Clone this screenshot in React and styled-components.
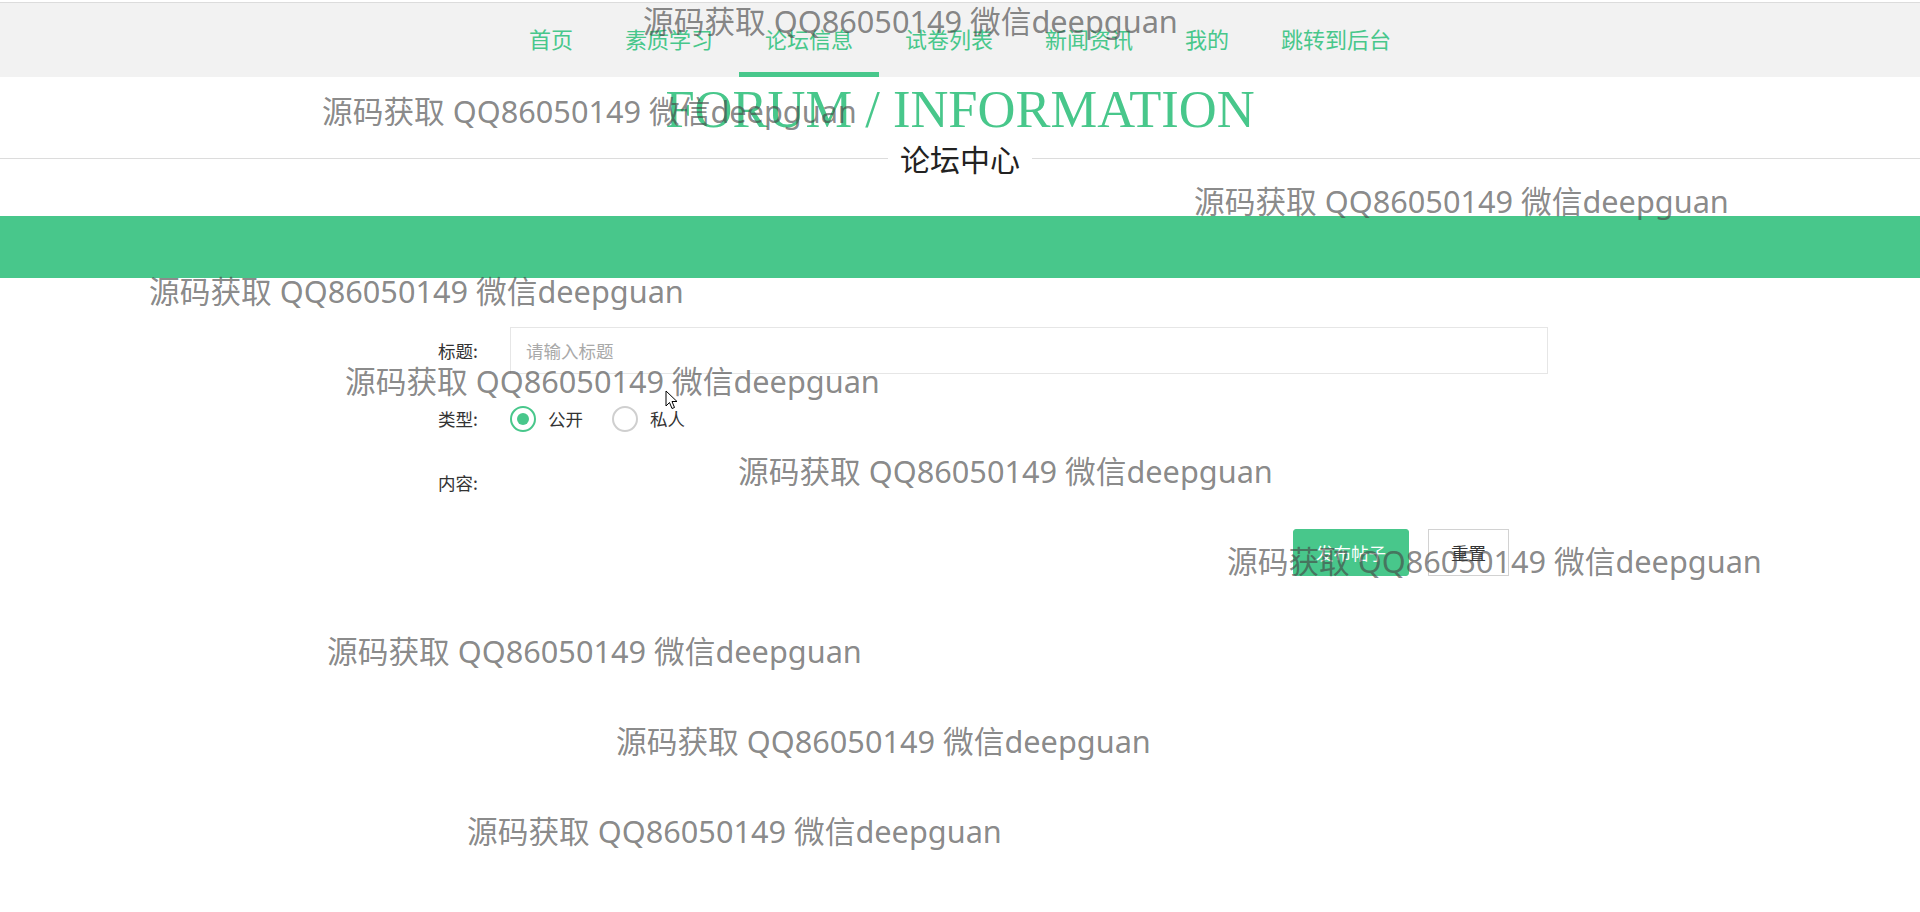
import React from "react";
import styled, { createGlobalStyle, css } from "styled-components";

const GREEN = "#48c78b";

const Global = createGlobalStyle`
  html, body { margin: 0; padding: 0; background: #fff; }
  body { font-family: "Noto Sans CJK SC", "Noto Sans", sans-serif; color: #333; }
  * { box-sizing: border-box; }
`;

const Page = styled.div`
  position: relative;
  width: 100%;
  min-height: 912px;
  overflow: hidden;
`;

const Nav = styled.nav`
  margin-top: 2px;
  border-top: 1px solid #dcdcdc;
  background: #f2f2f2;
  height: 75px;
  display: flex;
  justify-content: center;
`;

const NavItem = styled.a`
  position: relative;
  display: flex;
  align-items: center;
  padding: 0 26px 4px;
  font-size: 22px;
  color: ${GREEN};
  text-decoration: none;
  white-space: nowrap;
  ${(p) =>
    p.$active &&
    css`
      &::after {
        content: "";
        position: absolute;
        left: 0;
        right: 0;
        bottom: 0;
        height: 5px;
        background: ${GREEN};
      }
    `}
`;

const Title = styled.h1`
  margin: 0;
  padding-top: 3px;
  text-align: center;
  font-family: "Liberation Serif", "Times New Roman", serif;
  font-weight: 400;
  font-size: 52.5px;
  line-height: 58px;
  color: ${GREEN};
`;

const Divider = styled.div`
  display: flex;
  align-items: center;
  height: 40px;
  &::before,
  &::after {
    content: "";
    flex: 1;
    height: 1px;
    background: #dcdcdc;
  }
`;

const DividerText = styled.span`
  padding: 0 12px;
  font-size: 30px;
  line-height: 40px;
  color: #222;
`;

const Band = styled.div`
  margin-top: 38px;
  height: 62px;
  background: ${GREEN};
`;

const Form = styled.form`
  width: 1200px;
  margin: 0 auto;
  padding-top: 49px;
`;

const Row = styled.div`
  display: flex;
  align-items: center;
  height: 47px;
  padding-left: 78px;
  padding-right: 12px;
  margin-top: ${(p) => p.$mt || 0}px;
  justify-content: ${(p) => (p.$end ? "flex-end" : "flex-start")};
  ${(p) => p.$end && css`padding-right: 51px;`}
`;

const Label = styled.label`
  width: 72px;
  flex: none;
  font-size: 17.5px;
  color: #333;
`;

const Input = styled.input`
  flex: 1;
  height: 47px;
  border: 1px solid #e6e6e6;
  background: #fff;
  padding: 0 15px;
  font-family: "Noto Sans CJK SC", sans-serif;
  font-size: 17.5px;
  color: #333;
  outline: none;
  &::placeholder {
    color: #a9a9a9;
  }
`;

const RadioGroup = styled.div`
  display: flex;
  align-items: center;
  gap: 29px;
`;

const RadioOption = styled.span`
  display: flex;
  align-items: center;
  gap: 12px;
  font-size: 17.5px;
  color: #333;
`;

const RadioCircle = styled.span`
  position: relative;
  width: 26px;
  height: 26px;
  border-radius: 50%;
  border: 2px solid ${(p) => (p.$checked ? GREEN : "#cfcfcf")};
  background: #fff;
  ${(p) =>
    p.$checked &&
    css`
      &::after {
        content: "";
        position: absolute;
        left: 50%;
        top: 50%;
        width: 12px;
        height: 12px;
        margin: -6px 0 0 -6px;
        border-radius: 50%;
        background: ${GREEN};
      }
    `}
`;

const Button = styled.button`
  height: 47px;
  padding: 0 ${(p) => (p.$primary ? 22 : 22)}px;
  font-family: "Noto Sans CJK SC", sans-serif;
  font-size: 17.5px;
  border-radius: ${(p) => (p.$primary ? 3 : 0)}px;
  border: 1px solid ${(p) => (p.$primary ? GREEN : "#d2d2d2")};
  background: ${(p) => (p.$primary ? GREEN : "#fff")};
  color: ${(p) => (p.$primary ? "#fff" : "#333")};
  cursor: pointer;
`;

const ButtonGroup = styled.div`
  display: flex;
  gap: 19px;
`;

const WatermarkLayer = styled.div`
  position: absolute;
  inset: 0;
  pointer-events: none;
`;

const Watermark = styled.span`
  position: absolute;
  white-space: nowrap;
  font-family: "Noto Sans", "Noto Sans CJK SC", sans-serif;
  font-size: 30.7px;
  line-height: 40px;
  color: rgba(70, 70, 70, 0.65);
  transform: translateY(-50%);
`;

const Cursor = styled.svg`
  position: absolute;
  left: 665px;
  top: 390px;
  width: 13px;
  height: 20px;
`;

const navItems = ["首页", "素质学习", "论坛信息", "试卷列表", "新闻资讯", "我的", "跳转到后台"];
const marks = [643, 322, 1194, 149, 345, 738, 1227, 327, 616, 467];
const WM = "源码获取 QQ86050149 微信deepguan";

export default function App() {
  return (
    <Page>
      <Global />
      <Nav>
        {navItems.map((t) => (
          <NavItem key={t} $active={t === "论坛信息"}>
            {t}
          </NavItem>
        ))}
      </Nav>
      <Title>FORUM / INFORMATION</Title>
      <Divider>
        <DividerText>论坛中心</DividerText>
      </Divider>
      <Band />
      <Form onSubmit={(e) => e.preventDefault()}>
        <Row>
          <Label>标题:</Label>
          <Input placeholder="请输入标题" />
        </Row>
        <Row $mt={21}>
          <Label>类型:</Label>
          <RadioGroup>
            <RadioOption>
              <RadioCircle $checked />
              公开
            </RadioOption>
            <RadioOption>
              <RadioCircle />
              私人
            </RadioOption>
          </RadioGroup>
        </Row>
        <Row $mt={17}>
          <Label>内容:</Label>
        </Row>
        <Row $mt={23} $end>
          <ButtonGroup>
            <Button $primary type="submit">发布帖子</Button>
            <Button type="reset">重置</Button>
          </ButtonGroup>
        </Row>
      </Form>
      <WatermarkLayer>
        {marks.map((x, i) => (
          <Watermark key={i} style={{ left: x, top: 21 + 90 * i }}>
            {WM}
          </Watermark>
        ))}
        <Cursor viewBox="0 0 13 20">
          <path d="M1 1 L1 16 L4.5 12.5 L7 18.5 L9.5 17.5 L7 11.5 L12 11.5 Z" fill="#fff" stroke="#000" strokeWidth="1" strokeLinejoin="round" />
        </Cursor>
      </WatermarkLayer>
    </Page>
  );
}
